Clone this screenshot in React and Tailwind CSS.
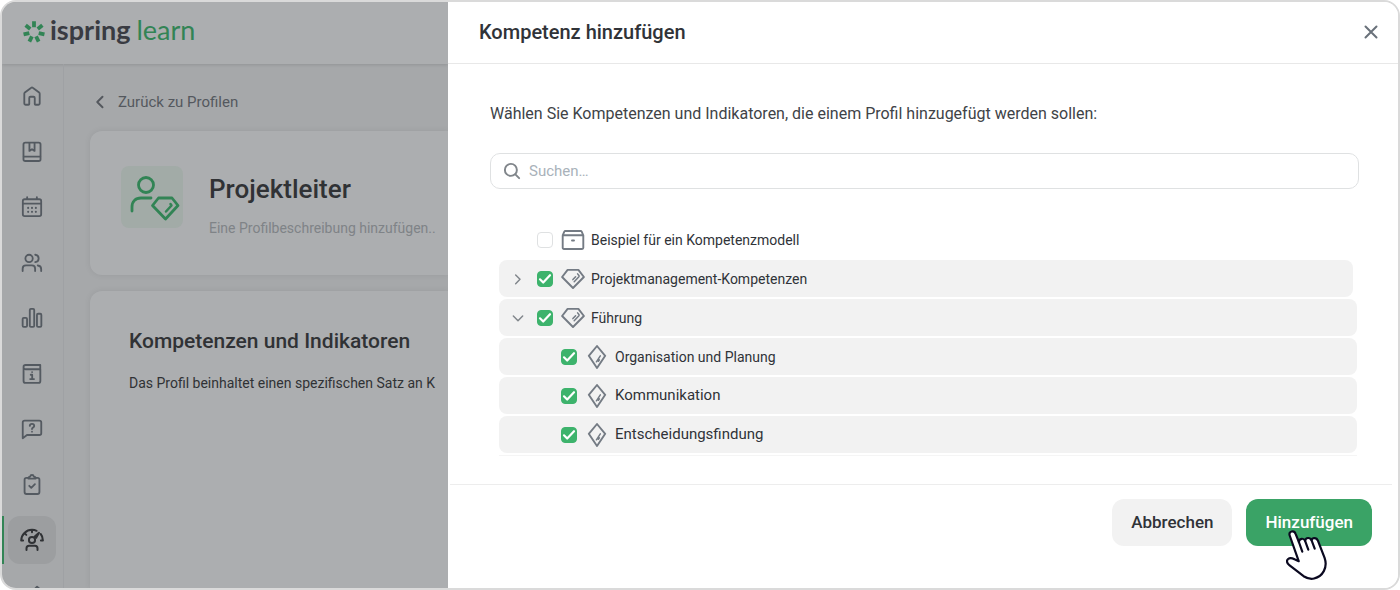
import { useState } from "react";

const Icon = ({ children, className = "h-6 w-6", width = 1.7, box = "0 0 24 24" }) => (
  <svg
    viewBox={box}
    className={className}
    fill="none"
    stroke="currentColor"
    strokeWidth={width}
    strokeLinecap="round"
    strokeLinejoin="round"
    aria-hidden="true"
  >
    {children}
  </svg>
);

const navItems = [
  {
    label: "Startseite",
    icon: <path d="M9 20.6v-6.500c0-.8.500-1.300 1.300-1.300h3.400c.8 0 1.300.5 1.300 1.300v6.500c0 .5.4.9.9.9h3.2c.8 0 1.300-.6 1.300-1.300V9.500c0-.6-.2-1-.6-1.400l-7-5.200c-.5-.4-1.100-.4-1.600 0l-7 5.200c-.4.4-.6.8-.6 1.400v10.700c0 .7.5 1.300 1.300 1.300h3.200c.5 0 .9-.4.9-.9z" />,
  },
  {
    label: "Kurse",
    icon: (
      <>
        <rect x="2.7" y="1.8" width="18.6" height="20" rx="2" />
        <path d="M3 17h18M9.200 2v8.800l2.800-1.900 2.800 1.900V2" />
      </>
    ),
  },
  {
    label: "Kalender",
    icon: (
      <>
        <rect x="2" y="3.500" width="20" height="18.500" rx="2" />
        <path d="M2.300 8.300h19.400M6.700 1.300v2M17.300 1.300v2" />
        <path strokeWidth="2.300" d="M7.800 13h.01M12 13h.01M16.200 13h.01M7.800 17.300h.01M12 17.300h.01M16.200 17.300h.01" />
      </>
    ),
  },
  {
    label: "Benutzer",
    icon: (
      <>
        <circle cx="8.800" cy="7" r="4" />
        <path d="M1.800 20.800v-2.600c0-2.200 1.400-3.600 3.600-3.600h6.400c2.200 0 3.600 1.400 3.600 3.600v2.600M15.500 3c5 .6 5 7.400 0 8M18.300 14.700c2.300.3 3.700 1.700 3.700 3.800v2.300" />
      </>
    ),
  },
  {
    label: "Berichte",
    icon: (
      <>
        <rect x="1.800" y="11.800" width="4.800" height="9.900" rx="1.200" />
        <rect x="9.600" y="2" width="4.800" height="19.700" rx="1.200" />
        <rect x="17.400" y="7.400" width="4.800" height="14.300" rx="1.200" />
      </>
    ),
  },
  {
    label: "Wissensdatenbank",
    icon: (
      <>
        <path d="M21 2.200H5c-1.300 0-2.200.8-2.200 2v15.400c0 1.200.8 2.100 2.100 2.100h14.200c1.200 0 2-.9 2-2.100V6.800H4.900c-1.200 0-2.100-.9-2.100-2M21 2.200v4.400" />
        <path d="M10.600 12.800h1.600v4.600M10 17.500h4.200M12.100 9.900v.01" />
      </>
    ),
  },
  {
    label: "Fragen",
    icon: (
      <>
        <path d="M4 2.800h16c1.200 0 2.100.8 2.100 2v11.700c0 1.200-.9 2-2.100 2H6.500L1.900 22V4.800c0-1.200.9-2 2.100-2z" />
        <path d="M9.600 8.600c.2-2.900 4.800-2.800 4.800.1 0 1.700-2.400 1.700-2.400 3.400M12 14.900v.01" />
      </>
    ),
  },
  {
    label: "Aufgaben",
    icon: (
      <>
        <path d="M7.300 4.300H6c-1.300 0-2.100.8-2.100 2.100v13.300c0 1.300.8 2.100 2.100 2.100h12c1.300 0 2.100-.8 2.100-2.100V6.400c0-1.300-.8-2.100-2.100-2.100h-1.300" />
        <path d="M8 5c0-1.300.8-2.100 2-2.100.3-2.400 3.700-2.400 4 0 1.200 0 2 .8 2 2.100zM9 12.900l2.200 2.200 4-4" />
      </>
    ),
  },
  {
    label: "Kompetenzen",
    active: true,
    icon: (
      <>
        <path d="M1.200 12.500C1.300 6.600 6.100 1.800 12 1.800c1.700 0 3.200.3 4.600 1M20.700 6c1.500 1.700 2.200 4 2.200 6.500M1.200 12.600h1.900M20.900 12.600h1.900M12 2v2.300M4.800 5.400l1.500 1.500" />
        <path d="M19 4.800l-4.200 3.800 1.500 1z" />
        <circle cx="12" cy="12" r="3.100" />
        <path d="M6.500 22v-1.800c0-1.500 1-2.500 2.500-2.500h6c1.500 0 2.500 1 2.500 2.500V22" />
      </>
    ),
  },
  {
    label: "Einstellungen",
    icon: <path d="M17.500 1.800l4 3.500-13 14H4.500v-4z" />,
  },
];

const Gem = () => (
  <Icon width={1.9}>
    <path d="M6.600 2.900h10.800L22.900 10 12 21 1.100 10z" />
    <path d="M16.600 6.900l1.300 1.600c.3.400.3.800 0 1.200l-4.700 5.100M14.600 9.700l-2.700 2.900" strokeWidth="1.500" />
  </Icon>
);

const Rhombus = () => (
  <Icon width={1.9}>
    <path d="M12 1L20.200 10.800 12 23 3.800 10.800z" />
    <path d="M15.300 10.800l-3.900 6M14.400 14.800l-1 1.500" strokeWidth="1.500" />
  </Icon>
);

const Box = () => (
  <Icon width={1.9}>
    <path d="M1.700 7.300h20.600v12.500c0 .7-.5 1.200-1.200 1.200H2.900c-.7 0-1.200-.5-1.200-1.200zM1.700 7.300l1.600-3.600c.2-.4.500-.7 1-.7h15.400c.5 0 .8.3 1 .7l1.600 3.600M11 12.500h2" />
  </Icon>
);

const Logo = () => (
  <a href="#start" className="mb-1.5 flex items-center text-[27px] leading-8 text-[#393b42]">
    <svg viewBox="0 0 24 24" className="mt-1 mr-1 h-6 w-6" stroke="#328455" strokeWidth="3.8" aria-hidden="true">
      {Array.from({ length: 7 }).map((_, i) => (
        <path key={i} d="M12 1.300v5.900" transform={`rotate(${(i * 360) / 7} 12 12)`} />
      ))}
    </svg>
    <span className="font-[Lato,sans-serif] font-bold">ispring</span>
    <span className="ml-1.5 font-[Lato,sans-serif] text-[#328455]">learn</span>
  </a>
);

const initialRows = [
  { id: "modell", label: "Beispiel für ein Kompetenzmodell", icon: <Box />, checked: false, plain: true },
  { id: "pm", label: "Projektmanagement-Kompetenzen", icon: <Gem />, checked: true, arrow: "right" },
  { id: "fuehrung", label: "Führung", icon: <Gem />, checked: true, arrow: "down" },
  { id: "planung", label: "Organisation und Planung", icon: <Rhombus />, checked: true, child: true },
  { id: "komm", label: "Kommunikation", icon: <Rhombus />, checked: true, child: true, large: true },
  { id: "entscheidung", label: "Entscheidungsfindung", icon: <Rhombus />, checked: true, child: true, large: true },
];

const CompetenceRow = ({ row, onToggle }) => (
  <li className={`flex h-[37px] items-center rounded-lg ${row.plain ? "" : "bg-[#f2f2f2]"} ${row.arrow === "right" ? "mr-1" : ""}`}>
    <div className={`flex shrink-0 items-center pl-[11px] ${row.child ? "w-[62px]" : "w-[38px]"}`}>
      {row.arrow && (
        <button type="button" aria-label={`${row.label} umschalten`} className="text-[#81868b]">
          <Icon className="h-4 w-4" width={2.2}>
            {row.arrow === "right" ? <path d="M8.500 6l6.500 6.500L8.500 19" /> : <path d="M5 9l7 7 7-7" />}
          </Icon>
        </button>
      )}
    </div>
    <label className="flex items-center">
      <span className="grid h-4 w-4 place-items-center">
        <input
          type="checkbox"
          checked={row.checked}
          onChange={() => onToggle(row.id)}
          className="col-start-1 row-start-1 h-4 w-4 appearance-none rounded border border-[#dfe1e2] bg-white checked:border-[#3db36c] checked:bg-[#3db36c]"
        />
        {row.checked && (
          <Icon className="pointer-events-none col-start-1 row-start-1 h-4 w-4 text-white" width={2.2} box="0 0 16 16">
            <path d="M3 8.300l3.200 3.200 6.800-7.300" />
          </Icon>
        )}
      </span>
      <span className="mr-1.5 ml-2 text-[#747b84]">{row.icon}</span>
      <span className={row.large ? "text-[15px]" : "text-sm"}>{row.label}</span>
    </label>
  </li>
);

const Pointer = () => (
  <svg viewBox="0 0 44 52" className="pointer-events-none absolute top-[31px] left-10 h-[52px] w-11" aria-hidden="true">
    <path
      d="M3.700 5.500C3 3.400 3.900 1.900 5.700 1.500c1.700-.4 3.200.4 3.900 2.300l3.300 8.200c.1-1.800 1.100-3 2.700-3.200 1.500-.2 2.800.6 3.500 2 .3-1.700 1.400-2.700 2.900-2.800 1.600-.1 2.900.7 3.500 2.200.3-1.300 1.200-2 2.500-2.100 2-.1 3.300.9 4 2.700l6.600 17c3.400 10-2 18.600-10.500 20.700-3.500.9-7.300-.3-10.500-2.300L3.300 35.200c-2.500-1.800-3-4.700-1.200-6.200 2-1.700 4.600-.7 6.400.3l4.200 1.900z"
      fill="#fff"
      stroke="#0b0920"
      strokeWidth="2.200"
      strokeLinejoin="round"
    />
    <path d="M12.900 12l3.400 9.600M19.100 10.800l3.200 8.800M25.500 10.200l3.200 8.400" fill="none" stroke="#0b0920" strokeWidth="2.200" strokeLinecap="round" />
  </svg>
);

const Background = () => (
  <div className="flex w-[446px] shrink-0 flex-col overflow-hidden bg-[#a6a8aa] whitespace-nowrap text-[#303235]">
    <header className="flex h-[62px] shrink-0 items-center bg-[#acaeb0] pl-5 shadow-[0_1px_3px_rgba(0,0,0,0.12)]">
      <Logo />
    </header>
    <div className="flex min-h-0 grow">
      <nav className="w-[62px] shrink-0 border-r border-[#9fa1a4] pt-2">
        <ul className="flex h-[548px] flex-col justify-between">
          {navItems.map((item) => (
            <li key={item.label} className={`flex border-l-2 ${item.active ? "border-[#328455]" : "border-transparent"}`}>
              <a
                href={`#${item.label.toLowerCase()}`}
                aria-label={item.label}
                className={`ml-1 flex h-12 w-12 items-center justify-center rounded-xl ${item.active ? "bg-[#9c9ea0] text-[#303235]" : "text-[#545a61]"}`}
              >
                <Icon className={item.active ? "h-6 w-6" : "h-[22px] w-[22px]"} width={2}>{item.icon}</Icon>
              </a>
            </li>
          ))}
        </ul>
      </nav>
      <main className="flex min-w-0 grow flex-col pt-[26px] pl-[26px]">
        <a href="#profile" className="flex items-center gap-2 text-[15px] leading-6 text-[#54585e]">
          <Icon className="ml-0.5 h-[18px] w-[18px]" width={2.6}>
            <path d="M14 5l-7 7 7 7" />
          </Icon>
          Zurück zu Profilen
        </a>
        <section className="mt-[17px] flex h-36 shrink-0 items-center rounded-l-xl bg-[#acaeb0] pl-[31px] shadow-[0_0_6px_rgba(0,0,0,0.08)]">
          <div className="mb-3 flex h-[62px] w-[62px] shrink-0 items-center justify-center rounded-lg bg-[#a2aba7] text-[#328455]">
            <Icon className="h-[62px] w-[62px]" width={2.8} box="0 0 62 62">
              <circle cx="25" cy="19" r="7.500" />
              <path d="M11 45v-4c0-5.500 3.500-9 9-9h10M37.500 32h13.500l6 7.500L44.500 53 31.500 39.500z" />
              <path d="M49.500 38l1 1.500-5.500 6" strokeWidth="2.500" />
            </Icon>
          </div>
          <div className="ml-[26px] mt-1">
            <h1 className="text-[26px] leading-8 font-medium">Projektleiter</h1>
            <p className="mt-[13px] text-sm leading-5 text-[#7f8387]">Eine Profilbeschreibung hinzufügen..</p>
          </div>
        </section>
        <section className="mt-4 grow rounded-tl-xl bg-[#acaeb0] pt-9 pl-[39px] shadow-[0_0_6px_rgba(0,0,0,0.08)]">
          <h2 className="text-[21px] leading-7 font-medium">Kompetenzen und Indikatoren</h2>
          <p className="mt-4 text-sm leading-6">Das Profil beinhaltet einen spezifischen Satz an K</p>
        </section>
      </main>
    </div>
  </div>
);

export default function App() {
  const [rows, setRows] = useState(initialRows);
  const [query, setQuery] = useState("");

  const toggle = (id) => setRows((prev) => prev.map((r) => (r.id === id ? { ...r, checked: !r.checked } : r)));
  const visible = rows.filter((r) => r.label.toLowerCase().includes(query.toLowerCase()));

  return (
    <div className="flex h-screen overflow-hidden rounded-2xl border-2 border-[#dadada] bg-white font-[Roboto,sans-serif] text-[#303338]">
      <Background />
      <div role="dialog" aria-labelledby="dialog-title" className="flex min-w-0 grow flex-col bg-white">
        <header className="flex h-[62px] shrink-0 items-center justify-between border-b border-[#e8e8e8] pr-4 pb-0.5 pl-[31px]">
          <h2 id="dialog-title" className="text-xl font-medium">Kompetenz hinzufügen</h2>
          <button type="button" aria-label="Schließen" className="text-[#69717a]">
            <Icon className="h-[22px] w-[22px]" width={2.2}>
              <path d="M6 6l12 12M18 6L6 18" />
            </Icon>
          </button>
        </header>

        <div className="grow pt-[38px] pr-[39px] pl-[42px]">
          <p className="text-base leading-6 text-[#404347]">Wählen Sie Kompetenzen und Indikatoren, die einem Profil hinzugefügt werden sollen:</p>
          <label className="mt-[27px] flex h-9 items-center gap-2 rounded-[10px] border border-[#dfe1e2] pl-3">
            <Icon className="h-[18px] w-[18px] text-[#81868b]" width={2.6}>
              <circle cx="10.500" cy="10.500" r="8" />
              <path d="M16.500 16.500l5 5" />
            </Icon>
            <input
              type="text"
              aria-label="Suchen"
              placeholder="Suchen…"
              value={query}
              onChange={(e) => setQuery(e.target.value)}
              className="min-w-0 grow bg-transparent text-[15px] outline-none placeholder:text-[#a9b2ba]"
            />
          </label>
          <ul className="mt-8 mr-0.5 ml-[9px] flex flex-col gap-0.5 border-b border-[#f5f5f5] pb-0.5">
            {visible.map((row) => (
              <CompetenceRow key={row.id} row={row} onToggle={toggle} />
            ))}
          </ul>
        </div>

        <footer className="mr-1.5 ml-0.5 flex h-[104px] shrink-0 items-start justify-end gap-3.5 border-t border-[#ededed] pt-3.5 pr-5 text-[17px] font-medium">
          <button type="button" className="h-[47px] rounded-xl bg-[#f2f2f2] px-[19px]">Abbrechen</button>
          <button type="button" className="relative h-[47px] rounded-xl bg-[#3aa366] px-[19px] text-white">
            Hinzufügen
            <Pointer />
          </button>
        </footer>
      </div>
    </div>
  );
}
